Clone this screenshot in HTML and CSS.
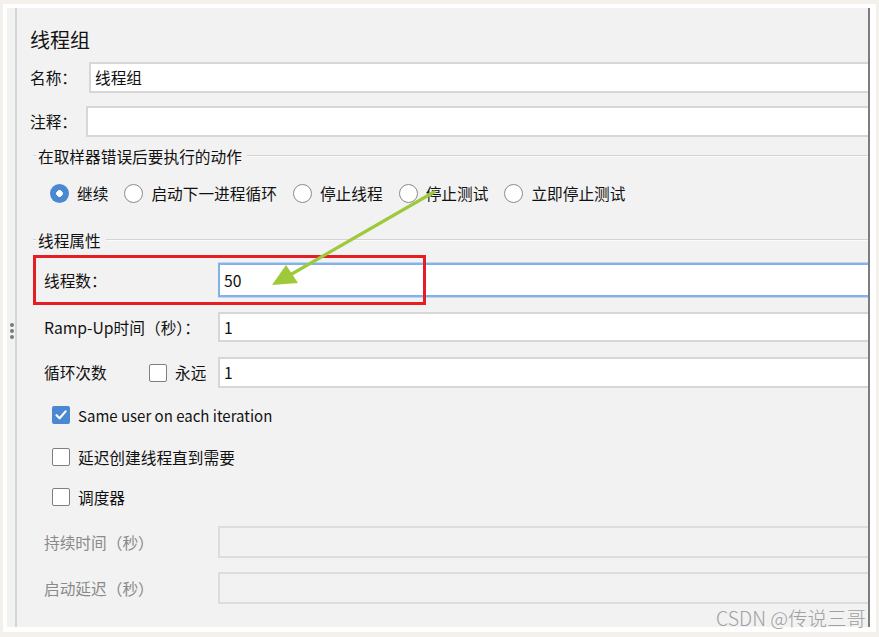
FILE: index.html
```html
<!DOCTYPE html>
<html lang="zh-CN">
  <head>
    <meta charset="UTF-8" />
    <title>线程组</title>
    <link rel="stylesheet" href="styles.css">
  </head>
  <body>
    <div class="frame">
      <div class="panel">
        <div class="gutter">
          <span class="grip"></span>
          <span class="grip"></span>
          <span class="grip"></span>
        </div>

        <div class="content">
          <div class="title">线程组</div>

          <div class="row row-name">
            <span class="lbl lbl-name">名称：</span>
            <div class="field">线程组</div>
          </div>

          <div class="row row-note">
            <span class="lbl lbl-note">注释：</span>
            <div class="field"></div>
          </div>

          <div class="group">
            <div class="legend legend-1"><span>在取样器错误后要执行的动作</span></div>
            <div class="radios">
              <span class="radio checked"></span><span class="rtext">继续</span>
              <span class="radio"></span><span class="rtext">启动下一进程循环</span>
              <span class="radio"></span><span class="rtext">停止线程</span>
              <span class="radio"></span><span class="rtext">停止测试</span>
              <span class="radio"></span><span class="rtext">立即停止测试</span>
            </div>
          </div>

          <div class="group">
            <div class="legend legend-2"><span>线程属性</span></div>

            <div class="prop prop-threads">
              <span class="plabel">线程数：</span>
              <div class="field focus">50</div>
            </div>

            <div class="prop prop-ramp">
              <span class="plabel">Ramp-Up时间（秒）：</span>
              <div class="field">1</div>
            </div>

            <div class="prop prop-loop">
              <span class="plabel loop-label">循环次数</span>
              <span class="check"></span>
              <span class="ctext forever">永远</span>
              <div class="field">1</div>
            </div>

            <div class="crow crow-1">
              <span class="check checked">
                <svg viewBox="0 0 18 18" width="18" height="18"><path d="M4.5 9.2 L7.6 12.3 L13.6 5.4" fill="none" stroke="#fff" stroke-width="2.2" stroke-linecap="round" stroke-linejoin="round"/></svg>
              </span>
              <span class="ctext latin">Same user on each iteration</span>
            </div>

            <div class="crow crow-2">
              <span class="check"></span>
              <span class="ctext">延迟创建线程直到需要</span>
            </div>

            <div class="crow crow-3">
              <span class="check"></span>
              <span class="ctext">调度器</span>
            </div>

            <div class="prop prop-duration">
              <span class="plabel muted">持续时间（秒）</span>
              <div class="field disabled"></div>
            </div>

            <div class="prop prop-delay">
              <span class="plabel muted">启动延迟（秒）</span>
              <div class="field disabled"></div>
            </div>
          </div>
        </div>
      </div>

      <div class="mark-box"></div>
      <svg class="mark-arrow" viewBox="0 0 879 637" width="879" height="637">
        <line x1="434" y1="192" x2="290" y2="275" stroke="#9dc93b" stroke-width="3.2" stroke-linecap="round"/>
        <polygon points="272,285 286,265 298,283" fill="#9dc93b"/>
      </svg>
      <div class="watermark">CSDN @传说三哥</div>
    </div>
  </body>
</html>
```

FILE: styles.css
```css
html,
body {
  margin: 0;
  height: 100%;
}
body {
  background: #f4f1ec;
  font-family: "Noto Sans CJK SC", "Noto Sans", sans-serif;
  color: #111;
  overflow: hidden;
}
.frame {
  position: relative;
  margin: 4px 0 0 3px;
  width: 873px;
  height: 628px;
  padding-top: 4px;
  box-sizing: border-box;
  background: #ffffff;
}
.panel {
  display: flex;
  margin-left: 4px;
  width: 863px;
  height: 619px;
  background: #f2f2f2;
  border-right: 2px solid #7c7c7c;
  box-sizing: border-box;
}
.gutter {
  width: 7px;
  flex: none;
  border-right: 2px solid #d6d6d6;
  display: flex;
  flex-direction: column;
  align-items: center;
  gap: 2px;
  padding-top: 315px;
  padding-left: 1px;
  box-sizing: content-box;
}
.grip {
  width: 4px;
  height: 4px;
  border-radius: 50%;
  background: #7a7a7a;
}
.content {
  flex: 1;
  min-width: 0;
}
.title {
  font-size: 20px;
  line-height: 24px;
  height: 24px;
  margin-top: 20px;
  padding-left: 13px;
}
.row {
  display: flex;
  align-items: center;
  height: 31px;
  font-size: 15.7px;
}
.row-name {
  margin-top: 10px;
}
.row-note {
  margin-top: 13px;
}
.lbl {
  padding-left: 13px;
  flex: none;
}
.lbl-name {
  width: 59px;
}
.lbl-note {
  width: 56px;
}
.field {
  flex: 1;
  align-self: stretch;
  background: #ffffff;
  border: 2px solid #d7d7d7;
  border-right: none;
  box-sizing: border-box;
  padding-left: 4px;
  display: flex;
  align-items: center;
  font-size: 15.7px;
}
.field.focus {
  border: 2px solid #82b2e6;
  border-right: none;
  box-shadow: 0 -1px 0 #bcd6f2, 0 1px 0 #bcd6f2;
}
.field.disabled {
  background: #f2f2f2;
  border-color: #dddddd;
}
.group {
  margin-left: 16px;
}
.legend {
  display: flex;
  align-items: center;
  height: 20px;
  font-size: 15.7px;
}
.legend::before {
  content: "";
  width: 3px;
  border-top: 1px solid #d4d4d4;
  border-bottom: 1px solid #fbfbfb;
  margin-right: 2px;
}
.legend::after {
  content: "";
  flex: 1;
  border-top: 1px solid #d4d4d4;
  border-bottom: 1px solid #fbfbfb;
  margin-left: 5px;
}
.legend-1 {
  margin-top: 9px;
}
.legend-2 {
  margin-top: 26px;
}
.radios {
  display: flex;
  align-items: center;
  height: 22px;
  margin-top: 16px;
  padding-left: 17px;
  font-size: 15.7px;
}
.radio {
  width: 19px;
  height: 19px;
  flex: none;
  border-radius: 50%;
  border: 1px solid #8a8a8a;
  background: #ffffff;
  box-sizing: border-box;
  margin-right: 8px;
}
.radio.checked {
  border: none;
  background: radial-gradient(circle, #ffffff 0 3px, #4a88d2 3.6px);
}
.rtext {
  margin-right: 16px;
}
.prop {
  display: flex;
  align-items: center;
  font-size: 15.7px;
}
.plabel {
  width: 185px;
  flex: none;
  padding-left: 11px;
  box-sizing: border-box;
}
.plabel.muted {
  color: #8a8a8a;
}
.loop-label {
  width: 116px;
}
.forever {
  width: 43px;
}
.prop-threads {
  height: 34px;
  margin-top: 13px;
}
.prop-ramp {
  height: 30px;
  margin-top: 15px;
}
.prop-loop {
  height: 31px;
  margin-top: 15px;
}
.prop-duration {
  height: 32px;
  margin-top: 18px;
}
.prop-delay {
  height: 32px;
  margin-top: 14px;
}
.check {
  width: 18px;
  height: 18px;
  flex: none;
  border: 1px solid #7f7f7f;
  border-radius: 2px;
  background: #ffffff;
  box-sizing: border-box;
  margin-right: 8px;
  display: flex;
}
.check.checked {
  border: none;
  background: #4a88d2;
}
.crow {
  display: flex;
  align-items: center;
  height: 22px;
  padding-left: 19px;
  font-size: 15.7px;
}
.ctext.latin {
  font-size: 15px;
}
.crow-1 {
  margin-top: 16px;
}
.crow-2 {
  margin-top: 20px;
}
.crow-3 {
  margin-top: 18px;
}
.mark-box {
  position: absolute;
  left: 30px;
  top: 251px;
  width: 393px;
  height: 50px;
  border: 3px solid #e51e25;
  box-sizing: border-box;
}
.mark-arrow {
  position: absolute;
  left: -3px;
  top: -4px;
  pointer-events: none;
}
.watermark {
  position: absolute;
  right: 10px;
  top: 602px;
  font-size: 19.5px;
  line-height: 24px;
  font-weight: 300;
  color: #a0a0a0;
}
```
